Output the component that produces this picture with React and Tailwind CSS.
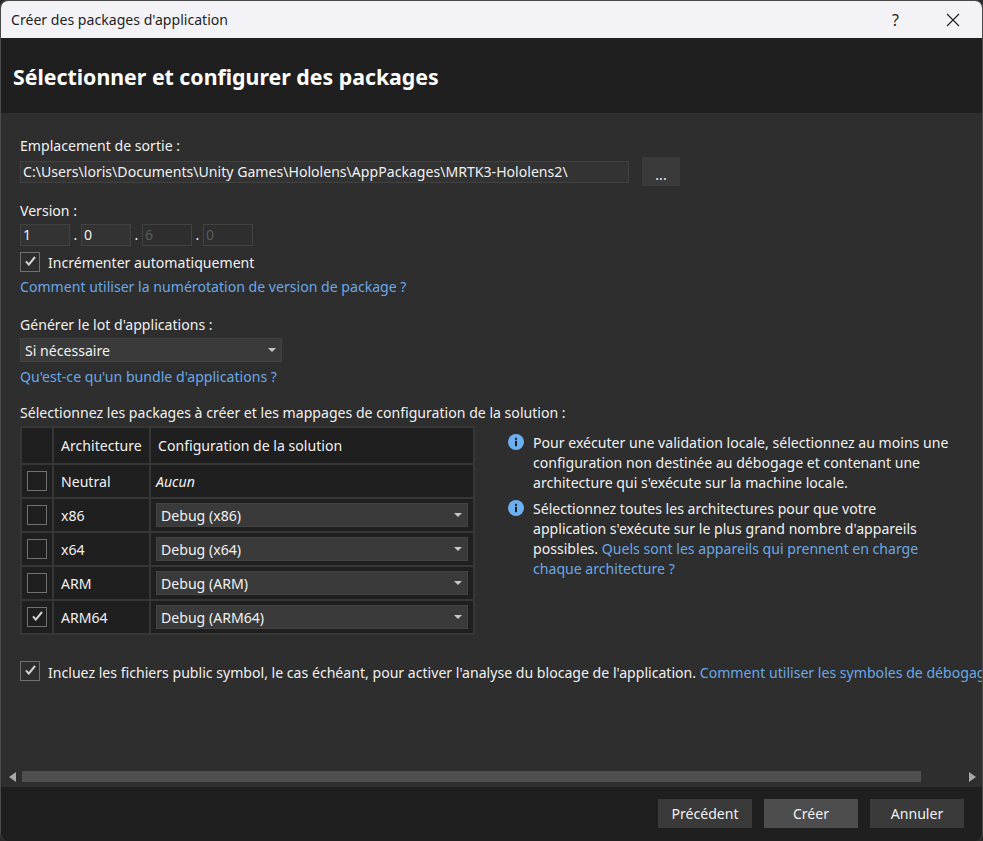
const font = { fontFamily: '"Noto Sans", sans-serif' }

function Caret() {
  return (
    <svg width="8" height="4" viewBox="0 0 8 4" className="shrink-0">
      <path d="M0 0h8L4 4z" fill="#c8c8c8" />
    </svg>
  )
}

function Check() {
  return (
    <svg width="11" height="10" viewBox="0 0 11 10" className="-mt-0.5">
      <path d="M1 5.4 3.8 8.6 10 1" fill="none" stroke="#d4d4d4" strokeWidth="2" />
    </svg>
  )
}

function Checkbox({ checked }) {
  return (
    <div className="flex h-5 w-5 shrink-0 items-center justify-center border border-[#707070]">
      {checked ? <Check /> : null}
    </div>
  )
}

function Select({ label, className }) {
  return (
    <div className={`flex h-6 items-center justify-between border border-[#424242] bg-[#3a3a3a] pl-1 pr-[5px] ${className}`}>
      <span className="mt-px leading-[18px]">{label}</span>
      <Caret />
    </div>
  )
}

function VersionBox({ value, disabled }) {
  return (
    <div className={`flex h-[22px] w-[50px] items-center border border-[#424242] pl-0.5 ${disabled ? 'text-[#5c5c5c]' : 'bg-[#333333]'}`}>
      {value}
    </div>
  )
}

function InfoIcon() {
  return (
    <svg width="16" height="16" viewBox="0 0 16 16" className="mt-px shrink-0">
      <circle cx="8" cy="8" r="8" fill="#6cb0f2" />
      <rect x="7" y="6.8" width="2" height="5.4" fill="#1f1f1f" />
      <rect x="7" y="3.8" width="2" height="2" fill="#1f1f1f" />
    </svg>
  )
}

const rows = [
  { arch: 'x86', config: 'Debug (x86)' },
  { arch: 'x64', config: 'Debug (x64)' },
  { arch: 'ARM', config: 'Debug (ARM)' },
  { arch: 'ARM64', config: 'Debug (ARM64)', checked: true },
]

function PackageTable() {
  return (
    <div className="mt-[3px] grid w-[455px] shrink-0 grid-cols-[30px_95px_322px] gap-[2px] bg-[#363636] p-[2px]">
      <div className="h-[35px] bg-[#1f1f1f]" />
      <div className="flex items-center bg-[#1f1f1f] pl-[7px]">Architecture</div>
      <div className="flex items-center bg-[#1f1f1f] pl-[7px]">Configuration de la solution</div>

      <div className="flex h-8 items-center justify-center bg-[#1f1f1f]"><Checkbox /></div>
      <div className="flex items-center bg-[#1f1f1f] pl-[7px] pt-px">Neutral</div>
      <div className="flex items-center bg-[#1f1f1f] pl-[5px] pt-px italic">Aucun</div>

      {rows.map((row) => (
        <div key={row.arch} className="contents">
          <div className="flex h-8 items-center justify-center bg-[#1f1f1f]"><Checkbox checked={row.checked} /></div>
          <div className="flex items-center bg-[#1f1f1f] pl-[7px] pt-px">{row.arch}</div>
          <div className="flex h-8 items-center bg-[#1f1f1f] px-[5px]">
            <Select label={row.config} className="w-full" />
          </div>
        </div>
      ))}
    </div>
  )
}

export default function App() {
  return (
    <div className="h-[841px] w-[983px] bg-[#2a2a2a]" style={font}>
      <div className="flex h-full flex-col overflow-hidden rounded-lg border-x border-t border-[#4a4a4a] text-[14.1px] leading-5 text-[#f1f1f1]">
        <div className="flex h-[37px] shrink-0 items-center justify-between bg-[#f3f3f7] pl-2.5 text-[#1f1f1f]">
          <span>Créer des packages d'application</span>
          <div className="flex items-center">
            <span className="mr-[47px] text-[16px]">?</span>
            <svg width="14" height="14" viewBox="0 0 14 14" className="mr-[22px]">
              <path d="M1 1l12 12M13 1 1 13" stroke="#1f1f1f" strokeWidth="1.1" fill="none" />
            </svg>
          </div>
        </div>

        <div className="flex h-[75px] shrink-0 items-center bg-[#1f1f1f] pl-3 pt-0.5 text-[21.3px] font-bold text-white">
          Sélectionner et configurer des packages
        </div>

        <div className="flex min-h-0 flex-1 flex-col bg-[#2e2e2e]">
          <div className="min-h-0 flex-1 overflow-hidden pl-[19px] pt-[23px]">
            <div>Emplacement de sortie :</div>
            <div className="mt-[1px] flex items-center">
              <div className="flex h-[22px] w-[609px] items-center border border-[#424242] bg-[#333333] pl-0.5">
                C:\Users\loris\Documents\Unity Games\Hololens\AppPackages\MRTK3-Hololens2\
              </div>
              <div className="ml-[13px] flex h-[29px] w-[38px] items-center justify-center bg-[#3a3a3a] pt-1.5">...</div>
            </div>

            <div className="mt-[15px]">Version :</div>
            <div className="mt-[3px] flex items-center">
              <VersionBox value="1" />
              <span className="w-[11px] text-center">.</span>
              <VersionBox value="0" />
              <span className="w-[11px] text-center">.</span>
              <VersionBox value="6" disabled />
              <span className="w-[11px] text-center">.</span>
              <VersionBox value="0" disabled />
            </div>
            <div className="mt-[6px] flex h-5 items-start gap-2">
              <Checkbox checked />
              <span className="mt-[1px]">Incrémenter automatiquement</span>
            </div>
            <div className="mt-[5px] text-[#6aa8e6]">Comment utiliser la numérotation de version de package ?</div>

            <div className="mt-[18px]">Générer le lot d'applications :</div>
            <Select label="Si nécessaire" className="mt-[3px] w-[262px]" />
            <div className="mt-[5px] text-[#6aa8e6]">Qu'est-ce qu'un bundle d'applications ?</div>

            <div className="mt-[16px]">Sélectionnez les packages à créer et les mappages de configuration de la solution :</div>

            <div className="flex items-start">
              <PackageTable />
              <div className="ml-[33px] mt-[10px] w-[446px]">
                <div className="flex gap-[9px]">
                  <InfoIcon />
                  <p>Pour exécuter une validation locale, sélectionnez au moins une configuration non destinée au débogage et contenant une architecture qui s'exécute sur la machine locale.</p>
                </div>
                <div className="mt-[6px] flex gap-[9px]">
                  <InfoIcon />
                  <p className="max-w-[395px]">
                    Sélectionnez toutes les architectures pour que votre application s'exécute sur le plus grand nombre d'appareils possibles.{' '}
                    <span className="text-[#6aa8e6]">Quels sont les appareils qui prennent en charge chaque architecture ?</span>
                  </p>
                </div>
              </div>
            </div>

            <div className="mt-[26px] flex h-5 items-start gap-2 whitespace-nowrap">
              <Checkbox checked />
              <span className="mt-[2px]">
                Incluez les fichiers public symbol, le cas échéant, pour activer l'analyse du blocage de l'application.{' '}
                <span className="text-[#6aa8e6]">Comment utiliser les symboles de débogage ?</span>
              </span>
            </div>
          </div>

          <div className="mb-[5px] flex h-[11px] shrink-0 items-center">
            <svg width="7" height="10" viewBox="0 0 7 10" className="ml-2 shrink-0">
              <path d="M7 0v10L0 5z" fill="#a8a8a8" />
            </svg>
            <div className="ml-1.5 h-[11px] w-[899px] bg-[#4f4f4f]" />
            <svg width="7" height="10" viewBox="0 0 7 10" className="ml-[48px] shrink-0">
              <path d="M0 0v10l7-5z" fill="#a8a8a8" />
            </svg>
          </div>
        </div>

        <div className="flex h-[54px] shrink-0 items-start justify-end gap-3 bg-[#1f1f1f] pr-[18px] pt-3">
          <div className="flex h-[29px] w-[94px] items-center justify-center bg-[#3a3a3a] pt-px">Précédent</div>
          <div className="flex h-[29px] w-[94px] items-center justify-center bg-[#4d4d4d] pt-px">Créer</div>
          <div className="flex h-[29px] w-[94px] items-center justify-center bg-[#3a3a3a] pt-px">Annuler</div>
        </div>
      </div>
    </div>
  )
}
